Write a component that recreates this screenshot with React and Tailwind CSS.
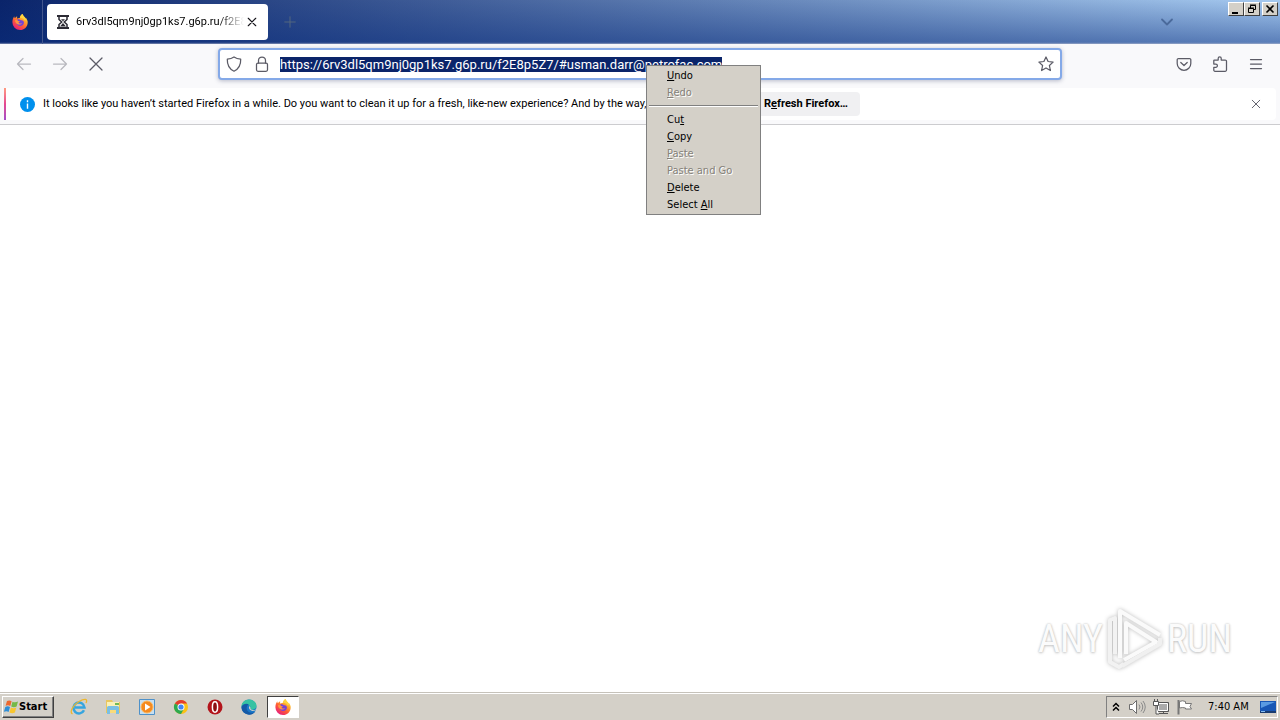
import React, { useEffect, useRef } from "react";

const UI = "font-['DejaVu_Sans_Condensed','DejaVu_Sans',sans-serif]";
const NARROW = "font-[Roboto,'Liberation_Sans',sans-serif]";
const ADDRESS = "https://6rv3dl5qm9nj0gp1ks7.g6p.ru/f2E8p5Z7/#usman.darr@petrofac.com";

function FirefoxIcon({ id }) {
  return (
    <svg viewBox="0 0 16 16" className="size-4" aria-hidden="true">
      <defs>
        <linearGradient id={id} x1="0.85" y1="0.05" x2="0.2" y2="1">
          <stop offset="0" stopColor="#fff44f" />
          <stop offset="0.3" stopColor="#ffa62b" />
          <stop offset="0.6" stopColor="#ff5a36" />
          <stop offset="1" stopColor="#e31587" />
        </linearGradient>
      </defs>
      <path
        d="M15.6 7.2c-.3-1.6-1.1-2.8-2-3.5.3.6.4 1 .4 1.3C13.200 3.200 11.200 2.300 10.500 0 8.700 1 8.100 2.700 8 3.700c-1 .1-1.800.5-2.400 1C5 4.200 5 3.100 5.200 2.300 4.300 2.700 3.600 3.400 3.100 4c-.5 0-.8-.9-.8-1.800C1.200 3.500.4 5.800.4 8.200A7.700 7.700 0 0 0 8 16c4.700 0 8.300-4 7.600-8.800z"
        fill={`url(#${id})`}
      />
      <path d="M5.300 5.600c1.200-.6 2.700-.2 3.500.6 1.800-.4 3.400.9 3.100 2.700-.3 1.900-2 3.200-4.100 3-2.200-.2-3.600-1.800-3.500-3.500 1 .5 2.400.5 3.300-.4-1.300-.2-2.300-1.100-2.300-2.400z" fill="#7542d8" />
      <path d="M3.100 6.200c1.300-.5 2.400-.1 3 .7.600.2 1.400.2 1.800.4-.1.600-1.400.8-1.500 1.400.8 1.200 2.400.8 3.600.2-.7 1.700-3.300 2.300-5 1C3.900 9 2.900 7.600 3.100 6.200z" fill="#ff9640" />
      <path d="M10.500 0C8.700 1 8.100 2.700 8 3.700c2.200-.2 4.100 1 4.900 2.900l1.100-.9C13.500 3.200 11.200 2.300 10.500 0z" fill="#ffd43e" />
    </svg>
  );
}

function LineIcon({ children, className = "size-4", width = 1.25 }) {
  return (
    <svg viewBox="0 0 16 16" className={className} fill="none" stroke="currentColor" strokeWidth={width} strokeLinecap="round" strokeLinejoin="round" aria-hidden="true">
      {children}
    </svg>
  );
}

const CROSS = <path d="M2 2l12 12M14 2L2 14" />;

function ToolButton({ label, children, className = "" }) {
  return (
    <button type="button" aria-label={label} className={`grid h-8 w-9 place-items-center text-[#5b5b66] ${className}`}>
      {children}
    </button>
  );
}

function CaptionButton({ label, children }) {
  return (
    <button
      type="button"
      aria-label={label}
      className="grid h-[14px] w-4 place-items-center border border-t-white border-l-white border-r-[#404040] border-b-[#404040] bg-[#d4d0c8] text-black"
    >
      {children}
    </button>
  );
}

function TitleBar() {
  return (
    <header className="flex h-11 bg-[linear-gradient(to_bottom,rgba(10,36,106,0)_0%,rgba(10,46,126,0.48)_96%,rgba(150,160,190,0.8)_100%),linear-gradient(to_right,#0a246a,#a6caf0)]">
      <div className="grid w-[43px] shrink-0 place-items-center border-r border-[#42568d] pr-[2px]">
        <FirefoxIcon id="fx-title" />
      </div>
      <div className="ml-1 mt-1 flex h-9 w-[221px] shrink-0 items-center rounded bg-white pl-2">
        <svg viewBox="0 0 16 16" className="size-4 shrink-0" fill="none" stroke="#2b2a33" aria-hidden="true">
          <path d="M2 2h12M2 14h12" strokeWidth="2" />
          <path d="M4 3v2.500l2.700 2.500L4 10.500V13M12 3v2.500L9.300 8l2.700 2.500V13" strokeWidth="1.500" />
          <path d="M6 5.200h4L8 7.200zM8 9l3 3.500H5z" fill="#2b2a33" stroke="none" />
        </svg>
        <span className={`ml-[5px] w-[168px] overflow-hidden whitespace-nowrap text-[11px] leading-4 text-black [mask-image:linear-gradient(to_right,black_85%,transparent)] ${NARROW}`}>
          6rv3dl5qm9nj0gp1ks7.g6p.ru/f2E8
        </span>
        <button type="button" aria-label="Close tab" className="grid h-6 w-4 shrink-0 place-items-center text-[#15141a]">
          <LineIcon className="size-[10px]" width={1.8}>{CROSS}</LineIcon>
        </button>
      </div>
      <button type="button" aria-label="New tab" className="grid w-11 place-items-center text-[#55697f]">
        <LineIcon className="size-3"><path d="M8 1v14M1 8h14" /></LineIcon>
      </button>
      <div className="flex-1" />
      <button type="button" aria-label="List all tabs" className="mr-[43px] grid w-9 place-items-center text-[#4b6a9b]">
        <LineIcon className="size-4" width={1.8}><path d="M3 5.500l5 5 5-5" /></LineIcon>
      </button>
      <div className="flex pt-[2px] pr-[2px]">
        <CaptionButton label="Minimize">
          <svg viewBox="0 0 12 10" className="h-[10px] w-3"><path d="M2 8h6v2H2z" fill="currentColor" /></svg>
        </CaptionButton>
        <CaptionButton label="Restore">
          <svg viewBox="0 0 12 10" className="h-[10px] w-3" fill="none" stroke="currentColor" aria-hidden="true">
            <path d="M4.500 4V1.500h5v4H8M4 1h6M2.500 4.500h5v4h-5zM2 4h6" />
          </svg>
        </CaptionButton>
        <span className="w-[2px]" />
        <CaptionButton label="Close">
          <svg viewBox="0 0 12 10" className="h-[10px] w-3" fill="none" stroke="currentColor" strokeWidth="1.600"><path d="M2.500 1.500l7 7M9.500 1.500l-7 7" /></svg>
        </CaptionButton>
      </div>
    </header>
  );
}

function NavBar() {
  const field = useRef(null);
  useEffect(() => {
    field.current.focus();
    field.current.select();
  }, []);
  return (
    <nav className="flex h-11 items-center bg-[#f9f9fb] pr-[6px] pb-1 pl-[6px]">
      <ToolButton label="Back" className="opacity-40"><LineIcon><path d="M14.500 8H1.500M7 2.500L1.500 8 7 13.500" /></LineIcon></ToolButton>
      <ToolButton label="Forward" className="opacity-40"><LineIcon><path d="M1.500 8h13M9 2.500L14.500 8 9 13.500" /></LineIcon></ToolButton>
      <ToolButton label="Stop"><LineIcon>{CROSS}</LineIcon></ToolButton>
      <div className="ml-[104px] flex h-8 flex-1 items-center rounded border-2 border-[#84a9e8] bg-white shadow-[0_1px_4px_rgba(60,70,110,0.35)]">
        <span className="grid w-7 place-items-center text-[#5b5b66]">
          <LineIcon><path d="M8 1c2 1.400 4 2 6.700 2.200.2 5.500-1.800 9.600-6.700 12C3.100 12.800 1.100 8.700 1.300 3.200 4 3 6 2.400 8 1z" /></LineIcon>
        </span>
        <span className="grid w-7 place-items-center text-[#5b5b66]">
          <LineIcon><rect x="2.500" y="7" width="11" height="8.300" rx="1.500" /><path d="M4.500 7V4.500a3.500 3.500 0 0 1 7 0V7" /></LineIcon>
        </span>
        <input
          ref={field}
          aria-label="Address"
          spellCheck={false}
          defaultValue={ADDRESS}
          className={`ml-1 h-6 min-w-0 flex-1 bg-transparent text-[13px] text-black outline-none selection:bg-[#0a246a] selection:text-white ${NARROW}`}
        />
        <button type="button" aria-label="Bookmark this page" className="grid h-7 w-7 place-items-center text-[#5b5b66]">
          <LineIcon><path d="M8 1l2.100 4.500 5 .6-3.700 3.400 1 5L8 12l-4.400 2.500 1-5L.9 6.100l5-.6z" /></LineIcon>
        </button>
      </div>
      <ToolButton label="Save to Pocket" className="ml-[104px]">
        <LineIcon><path d="M2.500 2.500h11a1.300 1.300 0 0 1 1.300 1.300V7.500a6.800 6.800 0 0 1-13.600 0V3.800a1.300 1.300 0 0 1 1.300-1.300zM4.800 6.500L8 9.500l3.200-3" /></LineIcon>
      </ToolButton>
      <ToolButton label="Extensions">
        <LineIcon><path d="M2.300 4h3.900V2.300a1.500 1.500 0 0 1 3 0V4h4a1.300 1.300 0 0 1 1.300 1.300v8.800a1.200 1.200 0 0 1-1.200 1.200H3A1.200 1.200 0 0 1 1.800 14v-2.700h2a1.600 1.600 0 0 0 0-3.200h-2V4.500a.5.5 0 0 1 .5-.5z" /></LineIcon>
      </ToolButton>
      <ToolButton label="Open application menu"><LineIcon><path d="M2.500 3.500h11M2.500 8h11M2.500 12.500h11" /></LineIcon></ToolButton>
    </nav>
  );
}

function Notice() {
  return (
    <section className="border-b border-[#cccccf] bg-[#f9f9fb] px-1 pb-1">
      <div className="flex h-8 items-center rounded-r bg-white">
        <div className="h-full w-[2px] bg-linear-to-b from-[#ff9a80] via-[#e5468f] to-[#a34bc8]" />
        <svg viewBox="0 0 16 16" className="ml-[14px] size-[15px] shrink-0" aria-hidden="true">
          <circle cx="8" cy="8" r="8" fill="#0090ed" />
          <path d="M8 3.500v2M8 7v5.500" stroke="#fff" strokeWidth="1.500" />
        </svg>
        <p className={`ml-2 w-[693px] whitespace-nowrap text-[11px] leading-4 text-black ${NARROW}`}>
          It looks like you haven’t started Firefox in a while. Do you want to clean it up for a fresh, like-new experience? And by the way, welcome back!
        </p>
        <button type="button" className={`ml-2 h-6 w-[116px] rounded bg-[#f0f0f2] text-right text-[11px] font-bold text-black ${NARROW}`}>
          <span className="pr-3">R<u>e</u>fresh Firefox…</span>
        </button>
        <button type="button" aria-label="Dismiss" className="mr-[11px] ml-auto grid size-[18px] place-items-center text-[#5b5b66]">
          <LineIcon className="size-[10px]" width={1.500}>{CROSS}</LineIcon>
        </button>
      </div>
    </section>
  );
}

function MenuItem({ before = "", access, after = "", disabled }) {
  return (
    <button
      type="button"
      role="menuitem"
      disabled={disabled}
      className="block h-[17px] w-full pl-5 text-left text-[11px] leading-[17px] text-black disabled:text-[#858179] disabled:[text-shadow:1px_1px_0_#fff]"
    >
      {before}{access && <u>{access}</u>}{after}
    </button>
  );
}

function ContextMenu() {
  return (
    <div role="menu" aria-label="Edit" className="absolute top-[65px] left-[646px] z-10 w-[115px] border border-[#808080] bg-[#d4d0c8] pt-px pb-px">
      <MenuItem access="U" after="ndo" />
      <MenuItem access="R" after="edo" disabled />
      <hr className="mx-[2px] mt-1 mb-1 h-[2px] border-0 border-t border-b border-t-[#808080] border-b-white" />
      <MenuItem before="Cu" access="t" />
      <MenuItem access="C" after="opy" />
      <MenuItem access="P" after="aste" disabled />
      <MenuItem after="Paste and Go" disabled />
      <MenuItem access="D" after="elete" />
      <MenuItem before="Select " access="A" after="ll" />
    </div>
  );
}

function Watermark() {
  const word = "font-['Liberation_Sans_Narrow','Roboto_Condensed','Liberation_Sans',sans-serif] text-[38px] leading-none text-[#fbfbfb] [text-shadow:0_0_2px_#bbb,0_1px_3px_#ccc]";
  return (
    <div className="mr-12 mb-5 flex items-center gap-1">
      <span className={word}>ANY</span>
      <svg viewBox="0 0 56 66" className="h-[66px] w-14 drop-shadow-[0_0_2px_#bbb]" fill="none" strokeWidth="4" strokeLinejoin="round" aria-hidden="true">
        <path d="M8 48V12L3 14v42l9 5 5-3" stroke="#f2f2f2" />
        <path d="M15 60l38-22v-6" stroke="#f0f0f0" />
        <path d="M13 52V5l40 24M19 48V17l30 19-32 18" stroke="#fafafa" />
      </svg>
      <span className={word}>RUN</span>
    </div>
  );
}

function StartFlag() {
  return (
    <svg viewBox="0 0 16 16" className="size-4" aria-hidden="true">
      <path d="M4 2c1.800-1 3.300-.7 4.600.2L7.300 7C5.700 6 4.300 6 2.600 6.800z" fill="#ed682f" />
      <path d="M9.500 2.700c1.600.9 3.400.9 5.500-.1l-1.400 5c-1.800.9-3.700.9-5.400-.1z" fill="#76b947" />
      <path d="M2.300 7.900c1.700-.9 3.200-.8 4.700.1l-1.400 4.900C4.200 12 2.700 12 .9 12.800z" fill="#2f8ed6" />
      <path d="M7.900 8.500c1.700.9 3.400 1 5.400.1l-1.400 4.900c-1.900 1-3.700.9-5.400-.1z" fill="#f8c62f" />
    </svg>
  );
}

const QUICK_LAUNCH = [
  ["Internet Explorer",
    <svg viewBox="0 0 18 18" className="size-[18px]" fill="none">
      <path d="M14 12.300A5.500 5.500 0 1 1 14.500 9.500H5" stroke="#36a5df" strokeWidth="2.500" />
      <path d="M2.500 16C-.8 14 3 7 9 3.500s9-2.500 7 1.500" stroke="#edb72d" strokeWidth="1.300" />
    </svg>],
  ["Windows Explorer",
    <svg viewBox="0 0 18 18" className="size-[18px]">
      <path d="M2 2h6l1 2h7v11H2z" fill="#e9c65e" />
      <path d="M3 4h12v5H3z" fill="#faf0b5" />
      <path d="M11 5h4v2h-4z" fill="#72b956" />
      <path d="M3 16V9.500q0-1.500 1.500-1.500h9q1.500 0 1.500 1.500V16h-3v-4H6v4z" fill="#7abfe4" />
      <path d="M6 12h6v3H6z" fill="#f9db79" />
    </svg>],
  ["Windows Media Player",
    <svg viewBox="0 0 18 18" className="size-[18px]">
      <path d="M1.500 1.500h15v15h-15z" fill="#c7dff1" stroke="#4e91c9" />
      <circle cx="9" cy="9" r="6" fill="#f58a1f" stroke="#ffb759" />
      <path d="M7 5.500v7L12.500 9z" fill="#fff" />
    </svg>],
  ["Chrome",
    <svg viewBox="0 0 18 18" className="size-[18px]">
      <circle cx="9" cy="9" r="7" fill="#fbc116" />
      <path d="M9 9L2.900 5.500A7 7 0 0 1 15.100 5.500H9z" fill="#e33b2e" />
      <path d="M9 9L2.900 5.500A7 7 0 0 0 9 16l3-5.200z" fill="#2da94f" />
      <circle cx="9" cy="9" r="3.500" fill="#fff" />
      <circle cx="9" cy="9" r="2.600" fill="#4285f4" />
    </svg>],
  ["Opera",
    <svg viewBox="0 0 18 18" className="size-[18px]">
      <circle cx="9" cy="9" r="7.500" fill="#b3141b" />
      <ellipse cx="9" cy="9" rx="2.600" ry="5.200" fill="#8d0e13" stroke="#fff" strokeWidth="1.500" />
    </svg>],
  ["Edge",
    <svg viewBox="0 0 18 18" className="size-[18px]">
      <circle cx="9" cy="9" r="7.500" fill="#1978c8" />
      <path d="M1.500 9C1.200 4.500 5 1.500 9 1.500c4.500 0 7.500 3 7.500 6.300 0 2.400-1.900 3.900-4.300 3.900-1.900 0-2.700-.8-1.700-2C10.600 6.800 5 4.500 1.500 9z" fill="#36c2a3" />
      <path d="M1.500 9C2.700 6 6.500 5 9 6.500c-3 .7-3.500 6.500 1 8 2 .7 4 .1 5.500-1-1.700 2.500-4.700 3.700-7.500 3C4 15.700 1.500 13 1.500 9z" fill="#1459a6" />
      <path d="M9.500 8c-1.700 2 .5 5 3 5 1.400 0 2.300-.4 3.300-.9l.6 1.200 1.600-1V9.500c-1 2-3 2.700-5 2.500-2-.1-3-.9-2.400-2.200z" fill="#d4d0c8" />
    </svg>],
];

function Taskbar() {
  return (
    <footer className="flex h-7 items-center border-t border-[#c6c2ba] bg-[#d4d0c8] pt-px pr-[2px] pl-[2px] shadow-[inset_0_1px_0_#fff]">
      <button type="button" className="flex h-[22px] w-[52px] items-center border border-t-white border-l-white border-r-[#404040] border-b-[#404040] text-[11px] font-bold text-black shadow-[inset_-1px_-1px_0_#808080]">
        <StartFlag />Start
      </button>
      <div className="ml-2 flex">
        {QUICK_LAUNCH.map(([name, icon]) => (
          <button key={name} type="button" aria-label={name} className="grid h-[22px] w-[34px] place-items-center">{icon}</button>
        ))}
        <button type="button" aria-label="Firefox" className="ml-px grid h-[22px] w-8 place-items-center border border-t-[#404040] border-l-[#404040] border-r-white border-b-white bg-white">
          <FirefoxIcon id="fx-task" />
        </button>
      </div>
      <div className="ml-auto flex h-[22px] items-center border border-t-[#808080] border-l-[#808080] border-r-white border-b-white pl-1">
        <button type="button" aria-label="Show hidden icons" className="grid w-[10px] place-items-center">
          <svg viewBox="0 0 8 10" className="h-[10px] w-2" fill="none" stroke="#000" strokeWidth="1.500"><path d="M1 4.500l3-3 3 3M1 8.500l3-3 3 3" /></svg>
        </button>
        <button type="button" aria-label="Volume" className="ml-[7px] grid w-[18px] place-items-center">
          <svg viewBox="0 0 18 16" className="h-4 w-[18px]" fill="none" stroke="#6d6d6d">
            <path d="M1.500 5.500h3l4-4v13l-4-4h-3z" fill="#fff" />
            <path d="M11 5.500q2 2.500 0 5M13 3.500q3.500 4.500 0 9M15 2q4.500 6 0 12" stroke="#8a8a8a" />
          </svg>
        </button>
        <button type="button" aria-label="Network" className="ml-[6px] grid w-[18px] place-items-center">
          <svg viewBox="0 0 18 16" className="h-4 w-[18px]" fill="none" stroke="#555">
            <path d="M5.500 3.500h11v9h-11z" fill="#aaa" /><path d="M6.500 4.500h9v7h-9z" stroke="#fff" />
            <path d="M7 14.500h9M11.500 13v2" /><path d="M1.500 2.500h5v4h-5zM2.500 0v2M5.500 0v2M4 7v8h3" fill="#fff" />
          </svg>
        </button>
        <button type="button" aria-label="Action Center" className="ml-[6px] grid w-[18px] place-items-center">
          <svg viewBox="0 0 18 16" className="h-4 w-[18px]" fill="#fff" stroke="#777">
            <path d="M2.500 1v14.500" strokeWidth="2" /><path d="M3.500 2.500q3-1.500 6 0v2h6l-1.500 3 1.500 2.500h-6V9q-3-1-6 0z" />
          </svg>
        </button>
        <time className="ml-[14px] w-[45px] text-[11px] leading-4 whitespace-nowrap text-black">7:40 AM</time>
        <button type="button" aria-label="Show desktop" className="ml-[6px] grid w-[18px] place-items-center">
          <svg viewBox="0 0 18 16" className="h-4 w-[18px]">
            <path d="M1 2h16v10H1z" fill="#1857b5" /><path d="M2 3h14L2 9z" fill="#5a9be2" /><path d="M1 12h16v2H1z" fill="#183b70" /><path d="M2 12h4v1H2z" fill="#83bcf2" />
          </svg>
        </button>
      </div>
    </footer>
  );
}

export default function App() {
  return (
    <div className={`relative flex min-h-screen flex-col bg-white ${UI}`}>
      <TitleBar />
      <NavBar />
      <Notice />
      <main className="flex flex-1 items-end justify-end">
        <Watermark />
      </main>
      <Taskbar />
      <ContextMenu />
    </div>
  );
}
